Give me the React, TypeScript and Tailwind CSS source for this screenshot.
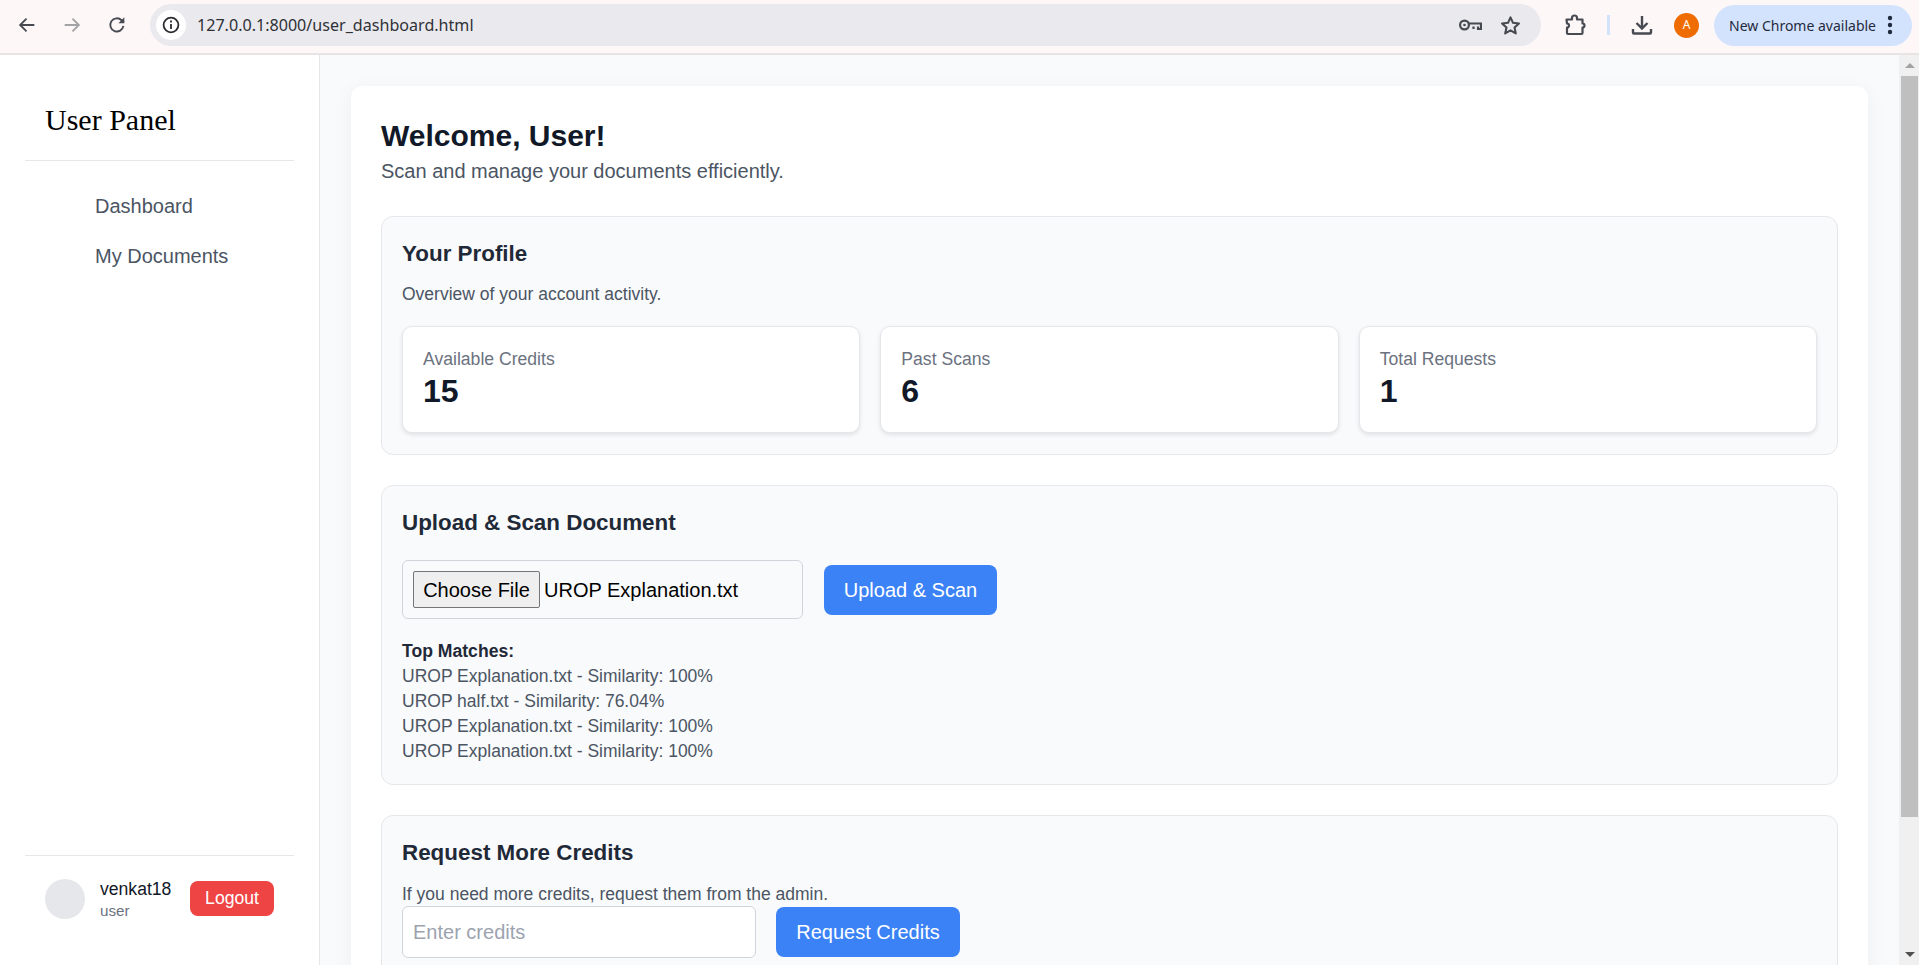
import React from "react";

const Stat = ({ label, value }: { label: string; value: string }) => (
  <div className="flex-1 h-[107px] bg-white rounded-[10px] border border-[#e5e7eb] shadow-[0_2px_4px_rgba(0,0,0,0.1)] pl-[20px] pt-[20px]">
    <div className="text-[17.6px] leading-[25px] text-[#6b7280]">{label}</div>
    <div className="text-[32px] leading-[38px] font-bold text-[#111827]">{value}</div>
  </div>
);

const Match = ({ children }: { children: React.ReactNode }) => (
  <div className="text-[17.5px] leading-[25px] text-[#4b5563]">{children}</div>
);

export default function App() {
  return (
    <div className="h-[965px] w-[1919px] overflow-hidden flex flex-col font-['Liberation_Sans',Arial,sans-serif]">
      {/* browser toolbar */}
      <header className="h-[55px] shrink-0 bg-[#fdf7f8] border-b-2 border-[#e9e3e5] flex items-center pb-[3px] font-['Noto_Sans',sans-serif]">
        <div className="flex items-center w-[150px] pl-[16px] gap-[23px] text-[#474a51]">
          <svg width="22" height="22" viewBox="0 0 24 24" fill="none" stroke="currentColor" strokeWidth="2"><path d="M20 12H5M11.5 5L4.5 12l7 7" /></svg>
          <svg width="22" height="22" viewBox="0 0 24 24" fill="none" stroke="#a3a3a6" strokeWidth="2"><path d="M4 12h15M12.5 5l7 7-7 7" /></svg>
          <svg width="22" height="22" viewBox="0 0 24 24" fill="none" stroke="currentColor" strokeWidth="2"><path d="M19 13a7.2 7.2 0 1 1-2-6.2L19.5 9" /><path d="M20 3.5V10h-6.5z" fill="currentColor" stroke="none" /></svg>
        </div>
        <div className="w-[1391px] h-[42px] rounded-full bg-[#e9e9ee] flex items-center pl-[6px] pr-[19px]">
          <div className="w-[30px] h-[30px] rounded-full bg-white flex items-center justify-center">
            <svg width="18" height="18" viewBox="0 0 18 18" fill="none" stroke="#2b2c30" strokeWidth="1.8"><circle cx="9" cy="9" r="7.4" /><path d="M9 8v5M9 4.6v1.8" /></svg>
          </div>
          <span className="ml-[11px] text-[16.1px] text-[#2f3136]">127.0.0.1:8000/user_dashboard.html</span>
          <div className="ml-auto flex items-center gap-[17px]">
            <svg width="24" height="24" viewBox="0 0 24 24" fill="none" stroke="#474a51" strokeWidth="2.200"><circle cx="6.500" cy="12" r="4.400" /><circle cx="6.500" cy="12" r="1.300" fill="#474a51" stroke="none" /><path d="M11 10.500H23V16h-3v-2.500M15.500 13.500V16" /></svg>
            <svg width="23" height="23" viewBox="0 0 24 24" fill="none" stroke="#474a51" strokeWidth="2.200" strokeLinejoin="round"><path d="M12 3.500l2.600 5.700 6.200.7-4.600 4.200 1.300 6.100-5.500-3.100-5.500 3.100 1.300-6.100-4.600-4.200 6.200-.7z" /></svg>
          </div>
        </div>
        <svg className="ml-[22px]" width="24" height="24" viewBox="0 0 24 24" fill="none" stroke="#474a51" strokeWidth="2.200" strokeLinejoin="round"><path d="M3.500 6.500h5.500V5a2.500 2.500 0 0 1 5 0v1.500h5.500V10.500a2 2 0 0 1 0 4v5.500a1 1 0 0 1-1 1H5a1 1 0 0 1-1-1v-5.500a2 2 0 0 0 0-4z" /></svg>
        <div className="ml-[20px] w-[3px] h-[20px] bg-[#d3e3fd]" />
        <svg className="ml-[20px]" width="24" height="24" viewBox="0 0 24 24" fill="none" stroke="#474a51" strokeWidth="2.400"><path d="M12 3v12M6.500 10l5.500 5.500 5.500-5.500M3 16v3.500c0 .6.400 1 1 1h16c.6 0 1-.4 1-1V16" /></svg>
        <div className="ml-[20px] w-[25px] h-[25px] rounded-full bg-[#ef6c00] text-white text-[12px] flex items-center justify-center">A</div>
        <div className="ml-[15px] w-[198px] h-[41px] rounded-full bg-[#d3e3fd] flex items-center pl-[15px] text-[14px] text-[#1f2a3d]">
          <span>New Chrome available</span>
          <svg className="ml-[11px]" width="6" height="20" viewBox="0 0 6 20" fill="#1f2a3d"><circle cx="3" cy="3" r="2.200" /><circle cx="3" cy="10" r="2.200" /><circle cx="3" cy="17" r="2.200" /></svg>
        </div>
      </header>

      <div className="flex-1 flex min-h-0">
        {/* sidebar */}
        <aside className="w-[320px] shrink-0 bg-white border-r border-[#e5e7eb] flex flex-col px-[25px]">
          <div className="h-[106px] border-b border-[#e5e7eb] pl-[20px] pt-[47px] font-['Liberation_Serif',serif] text-[30px] leading-[36px] text-black">User Panel</div>
          <nav className="pl-[70px] pt-[20px] text-[#4b5563] text-[20px] leading-[50px]">
            <div className="h-[50px]">Dashboard</div>
            <div className="h-[50px]">My Documents</div>
          </nav>
          <div className="mt-auto h-[55px] mb-[55px] border-t border-[#e5e7eb] flex pt-[23px] pl-[20px]">
            <div className="w-[40px] h-[40px] rounded-full bg-[#e5e7eb]" />
            <div className="ml-[15px] w-[90px]">
              <div className="text-[17.6px] leading-[20px] text-[#111827]">venkat18</div>
              <div className="text-[15.2px] leading-[20px] mt-[2px] text-[#6b7280]">user</div>
            </div>
            <div className="h-[35px] w-[84px] mt-[2px] rounded-[8px] bg-[#ef4444] text-white text-[17.6px] flex items-center justify-center">Logout</div>
          </div>
        </aside>

        {/* main */}
        <main className="flex-1 min-w-0 bg-[#f9fafb] pl-[31px] pr-[31px] pt-[31px] overflow-hidden">
          <div className="bg-white rounded-[12px] shadow-[0_4px_20px_rgba(0,0,0,0.05)] p-[30px] pb-[200px]">
            <h1 className="text-[30px] leading-[34px] font-bold text-[#111827] mt-[3px]">Welcome, User!</h1>
            <p className="text-[20px] leading-[28px] mt-[4px] text-[#4b5563]">Scan and manage your documents efficiently.</p>

            <section className="mt-[31px] h-[239px] rounded-[12px] border border-[#e5e7eb] bg-[#f9fafb] px-[20px] pt-[22px]">
              <h2 className="text-[22.4px] leading-[30px] font-bold text-[#1f2937]">Your Profile</h2>
              <p className="mt-[13px] text-[17.5px] leading-[24px] text-[#4b5563]">Overview of your account activity.</p>
              <div className="mt-[20px] flex gap-[20px]">
                <Stat label="Available Credits" value="15" />
                <Stat label="Past Scans" value="6" />
                <Stat label="Total Requests" value="1" />
              </div>
            </section>

            <section className="mt-[30px] h-[300px] rounded-[12px] border border-[#e5e7eb] bg-[#f9fafb] px-[20px] pt-[22px]">
              <h2 className="text-[22.4px] leading-[30px] font-bold text-[#1f2937]">Upload &amp; Scan Document</h2>
              <div className="mt-[22px] flex items-center gap-[21px]">
                <div className="w-[401px] h-[59px] rounded-[6px] border border-[#d1d5db] flex items-center pl-[10px] text-[20px] text-black">
                  <button className="w-[127px] h-[37px] rounded-[2px] bg-[#efefef] border border-[#767676] text-[20px]">Choose File</button>
                  <span className="ml-[4px]">UROP Explanation.txt</span>
                </div>
                <button className="w-[173px] h-[50px] rounded-[8px] bg-[#3b82f6] text-white text-[20px]">Upload &amp; Scan</button>
              </div>
              <div className="mt-[20px]">
                <div className="text-[17.6px] leading-[25px] font-bold text-[#1f2937]">Top Matches:</div>
                <Match>UROP Explanation.txt - Similarity: 100%</Match>
                <Match>UROP half.txt - Similarity: 76.04%</Match>
                <Match>UROP Explanation.txt - Similarity: 100%</Match>
                <Match>UROP Explanation.txt - Similarity: 100%</Match>
              </div>
            </section>

            <section className="mt-[30px] rounded-[12px] border border-[#e5e7eb] bg-[#f9fafb] px-[20px] pt-[22px] pb-[20px]">
              <h2 className="text-[22.4px] leading-[30px] font-bold text-[#1f2937]">Request More Credits</h2>
              <p className="mt-[14px] text-[17.5px] leading-[24px] text-[#4b5563]">If you need more credits, request them from the admin.</p>
              <div className="flex items-center gap-[20px]">
                <div className="w-[354px] h-[52px] rounded-[6px] border border-[#d1d5db] bg-white flex items-center pl-[10px] text-[20px] text-[#9ca3af]">Enter credits</div>
                <button className="w-[184px] h-[50px] rounded-[8px] bg-[#3b82f6] text-white text-[20px]">Request Credits</button>
              </div>
            </section>
          </div>
        </main>

        {/* scrollbar */}
        <div className="w-[20px] shrink-0 bg-[#f0f0f0] flex flex-col items-center pl-[2px] pr-[1px]">
          <div className="h-[21px] w-full flex items-center justify-center">
            <div className="w-0 h-0 border-x-[5px] border-x-transparent border-b-[5px] border-b-[#a3a3a3]" />
          </div>
          <div className="h-[741px] w-full bg-[#bfbfbf]" />
          <div className="mt-auto h-[22px] w-full flex items-center justify-center">
            <div className="w-0 h-0 border-x-[5px] border-x-transparent border-t-[5px] border-t-[#505050]" />
          </div>
        </div>
      </div>
    </div>
  );
}
